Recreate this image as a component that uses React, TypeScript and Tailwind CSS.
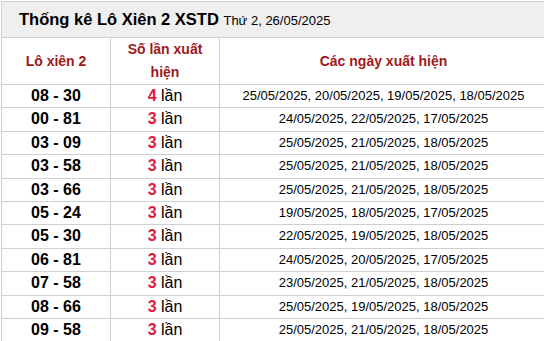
const rows: { pair: string; count: number; dates: string }[] = [
  { pair: "08 - 30", count: 4, dates: "25/05/2025, 20/05/2025, 19/05/2025, 18/05/2025" },
  { pair: "00 - 81", count: 3, dates: "24/05/2025, 22/05/2025, 17/05/2025" },
  { pair: "03 - 09", count: 3, dates: "25/05/2025, 21/05/2025, 18/05/2025" },
  { pair: "03 - 58", count: 3, dates: "25/05/2025, 21/05/2025, 18/05/2025" },
  { pair: "03 - 66", count: 3, dates: "25/05/2025, 21/05/2025, 18/05/2025" },
  { pair: "05 - 24", count: 3, dates: "19/05/2025, 18/05/2025, 17/05/2025" },
  { pair: "05 - 30", count: 3, dates: "22/05/2025, 19/05/2025, 18/05/2025" },
  { pair: "06 - 81", count: 3, dates: "24/05/2025, 20/05/2025, 17/05/2025" },
  { pair: "07 - 58", count: 3, dates: "23/05/2025, 21/05/2025, 18/05/2025" },
  { pair: "08 - 66", count: 3, dates: "25/05/2025, 19/05/2025, 18/05/2025" },
  { pair: "09 - 58", count: 3, dates: "25/05/2025, 21/05/2025, 18/05/2025" },
];

export default function App() {
  return (
    <div className="h-[341px] w-[544px] overflow-hidden bg-white pl-px pt-px font-['Liberation_Sans',Arial,sans-serif] text-black">
      <table className="w-[547px] table-fixed border-collapse border border-[#bdbdbd]">
        <colgroup>
          <col className="w-[109px]" />
          <col className="w-[109px]" />
          <col />
        </colgroup>
        <thead>
          <tr className="h-[36px] bg-[#efefef]">
            <th colSpan={3} className="border border-[#cfcfcf] pl-[17px] text-left text-[16.5px] font-bold">
              Thống kê Lô Xiên 2 XSTD{" "}
              <span className="text-[13px] font-normal">Thứ 2, 26/05/2025</span>
            </th>
          </tr>
          <tr className="h-[47px] text-[14px] font-bold leading-[23px] text-[#9e1a1a]">
            <th className="border border-[#cfcfcf]">Lô xiên 2</th>
            <th className="border border-[#cfcfcf] px-[15px]">Số lần xuất hiện</th>
            <th className="border border-[#cfcfcf]">Các ngày xuất hiện</th>
          </tr>
        </thead>
        <tbody>
          {rows.map((r) => (
            <tr key={r.pair} className="h-[23.4px] leading-[22.4px]">
              <td className="border border-[#cfcfcf] p-0 text-center text-[16px] font-bold">{r.pair}</td>
              <td className="border border-[#cfcfcf] p-0 text-center text-[16px]">
                <span className="font-bold text-[#e0183f]">{r.count}</span> lần
              </td>
              <td className="border border-[#cfcfcf] p-0 text-center text-[13px]">{r.dates}</td>
            </tr>
          ))}
        </tbody>
      </table>
    </div>
  );
}
